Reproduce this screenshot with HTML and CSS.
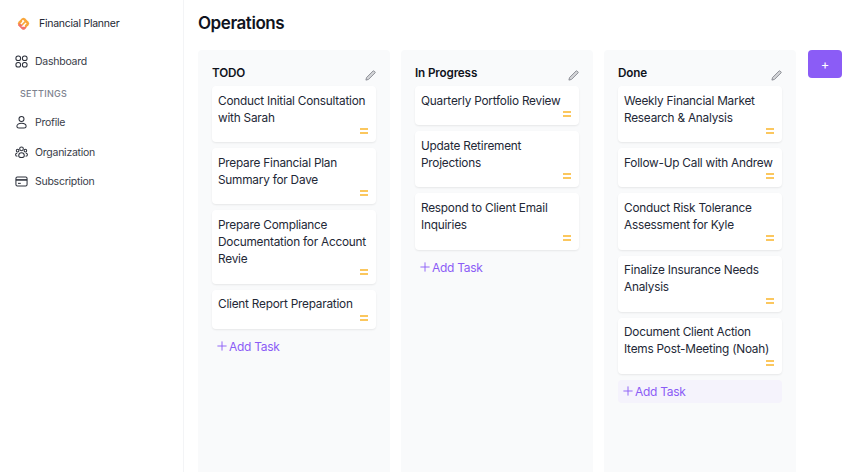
FILE: index.html
```html
<!DOCTYPE html>
<html lang="en">
<head>
<meta charset="utf-8">
<title>Operations</title>
<link rel="stylesheet" href="styles.css">
</head>
<body>
<div class="app">
  <aside class="sidebar">
    <div class="brand">
      <svg class="logo" width="15" height="15" viewBox="0 0 16 16"><rect x="3" y="3" width="10" height="10" rx="2.500" transform="rotate(45 8 8)" fill="#f9a63a"/><path d="M2.200 9.800L6.200 13.800a2.500 2.500 0 003.600 0l1.500-1.500-6.500-3.800-1.500-1z" fill="#f3736c"/><path d="M5.200 8.600L8.600 5.200M8.600 5.200H6.400M10.800 7.400L7.400 10.800H9.600" stroke="#fff" stroke-width="1.500" fill="none"/></svg>
      <span>Financial Planner</span>
    </div>
    <nav class="nav">
      <a class="nav-item">
        <svg class="nav-icon" viewBox="0 0 14 14"><rect x="1" y="1" width="5" height="5" rx="2.300"/><rect x="8" y="1" width="5" height="5" rx="2.300"/><rect x="1" y="8" width="5" height="5" rx="2.300"/><rect x="8" y="8" width="5" height="5" rx="2.300"/></svg>
        <span>Dashboard</span>
      </a>
      <div class="nav-heading">SETTINGS</div>
      <a class="nav-item">
        <svg class="nav-icon" viewBox="0 0 14 14"><circle cx="7" cy="3.300" r="2.700"/><path d="M7 7.700c-3 0-5 1.500-5 3.300 0 1.300 1 2 2.200 2h5.600c1.200 0 2.200-.7 2.200-2 0-1.800-2-3.300-5-3.300z"/></svg>
        <span>Profile</span>
      </a>
      <a class="nav-item">
        <svg class="nav-icon" viewBox="0 0 14 14"><circle cx="7" cy="3" r="2"/><circle cx="2.800" cy="5" r="1.400"/><circle cx="11.200" cy="5" r="1.400"/><path d="M4 10.500c0-2 1.200-3.200 3-3.200s3 1.200 3 3.200c0 1.300-1.300 2-3 2s-3-.7-3-2z"/><path d="M2.400 7.500C1.200 7.800.6 8.500.6 9.400c0 .9.800 1.500 2 1.600M11.600 7.500c1.200.3 1.800 1 1.800 1.900 0 .9-.8 1.500-2 1.600"/></svg>
        <span>Organization</span>
      </a>
      <a class="nav-item">
        <svg class="nav-icon" viewBox="0 0 14 14"><rect x="1" y="2.200" width="12" height="9.600" rx="1.500"/><path d="M1 5.300h12" stroke-width="1.700"/><path d="M3.200 9h3"/></svg>
        <span>Subscription</span>
      </a>
    </nav>
  </aside>
  <main class="main">
    <h1 class="title">Operations</h1>
    <div class="board">
      <section class="column">
        <header class="col-head"><h2>TODO</h2><svg class="edit" viewBox="0 0 12 12"><path d="M1 11l.7-2.800L8.800 1.100a.8.8 0 011.100 0l1 1a.8.8 0 010 1.100L3.800 10.300z"/></svg></header>
        <div class="cards">
          <article class="card"><p>Conduct Initial Consultation with Sarah</p><div class="card-foot"><span class="prio"></span></div></article>
          <article class="card"><p>Prepare Financial Plan Summary for Dave</p><div class="card-foot"><span class="prio"></span></div></article>
          <article class="card"><p>Prepare Compliance Documentation for Account Revie</p><div class="card-foot"><span class="prio"></span></div></article>
          <article class="card"><p>Client Report Preparation</p><div class="card-foot"><span class="prio"></span></div></article>
        </div>
        <a class="add"><svg viewBox="0 0 12 12"><path d="M6 .5v11M.5 6h11"/></svg>Add Task</a>
      </section>
      <section class="column">
        <header class="col-head"><h2>In Progress</h2><svg class="edit" viewBox="0 0 12 12"><path d="M1 11l.7-2.800L8.800 1.100a.8.8 0 011.100 0l1 1a.8.8 0 010 1.100L3.800 10.300z"/></svg></header>
        <div class="cards">
          <article class="card"><p>Quarterly Portfolio Review</p><div class="card-foot"><span class="prio"></span></div></article>
          <article class="card"><p>Update Retirement Projections</p><div class="card-foot"><span class="prio"></span></div></article>
          <article class="card"><p>Respond to Client Email Inquiries</p><div class="card-foot"><span class="prio"></span></div></article>
        </div>
        <a class="add"><svg viewBox="0 0 12 12"><path d="M6 .5v11M.5 6h11"/></svg>Add Task</a>
      </section>
      <section class="column">
        <header class="col-head"><h2>Done</h2><svg class="edit" viewBox="0 0 12 12"><path d="M1 11l.7-2.800L8.800 1.100a.8.8 0 011.100 0l1 1a.8.8 0 010 1.100L3.800 10.300z"/></svg></header>
        <div class="cards">
          <article class="card"><p>Weekly Financial Market Research &amp; Analysis</p><div class="card-foot"><span class="prio"></span></div></article>
          <article class="card"><p>Follow-Up Call with Andrew</p><div class="card-foot"><span class="prio"></span></div></article>
          <article class="card"><p>Conduct Risk Tolerance Assessment for Kyle</p><div class="card-foot"><span class="prio"></span></div></article>
          <article class="card"><p>Finalize Insurance Needs Analysis</p><div class="card-foot"><span class="prio"></span></div></article>
          <article class="card"><p>Document Client Action Items Post-Meeting (Noah)</p><div class="card-foot"><span class="prio"></span></div></article>
        </div>
        <a class="add add-hover"><svg viewBox="0 0 12 12"><path d="M6 .5v11M.5 6h11"/></svg>Add Task</a>
      </section>
      <button class="new-col" type="button">+</button>
    </div>
  </main>
</div>
</body>
</html>
```
FILE: styles.css
```css
* { box-sizing: border-box; }
html, body { height: 100%; }
body { margin: 0; font-family: Inter, "Liberation Sans", sans-serif; color: #1f2430; background: #fff; overflow: hidden; }
.app { display: flex; height: 472px; }
.sidebar { width: 184px; flex: none; border-right: 1px solid #f3f4f6; padding: 15px 14px 0 15px; }
.brand { display: flex; align-items: center; gap: 8px; height: 17px; padding-left: 1px; font-size: 10.500px; letter-spacing: -.25px; color: #232733; }
.logo { flex: none; }
.nav { margin-top: 15px; display: flex; flex-direction: column; }
.nav-item { display: flex; align-items: center; gap: 7px; height: 29.700px; font-size: 10.500px; letter-spacing: -.25px; color: #383c48; }
.nav-icon { width: 13px; height: 13px; flex: none; fill: none; stroke: #2c303b; stroke-width: 1.100; }
.nav-heading { font-size: 9px; font-weight: 500; color: #7d828e; letter-spacing: .3px; margin: 10px 0 7px 5px; height: 14px; line-height: 14px; }
.main { flex: 1; padding: 12px 0 0 14px; min-width: 0; }
.title { margin: 0 0 15px; font-size: 17px; letter-spacing: -.45px; font-weight: 600; line-height: 23px; color: #0f1320; }
.board { display: flex; gap: 11px; align-items: flex-start; }
.column { width: 192px; height: 430px; flex: none; background: #f9fafb; border-radius: 4px; padding: 14px 14px 0; }
.col-head { display: flex; justify-content: space-between; align-items: flex-end; height: 22px; }
.col-head h2 { margin: 0 0 4px; font-size: 11.700px; letter-spacing: -.15px; font-weight: 600; line-height: 18px; color: #10131c; }
.edit { width: 11px; height: 11px; fill: #d4d5d8; stroke: #85888f; stroke-width: 1; margin-bottom: 5px; }
.cards { display: flex; flex-direction: column; gap: 6px; }
.card { background: #fff; border-radius: 4px; padding: 6.600px 6px 0; box-shadow: 0 1px 2px rgba(0,0,0,.08); }
.card p { margin: 0; font-size: 11.800px; letter-spacing: -.22px; line-height: 17px; color: #232836; }
.card-foot { display: flex; justify-content: flex-end; height: 15.600px; padding: 1.400px 2px 0 0; }
.prio { width: 8px; height: 6px; background: linear-gradient(#fbc75e 0 2px, transparent 2px 4px, #fbc75e 4px 6px); }
.add { display: flex; align-items: center; gap: 2px; height: 23px; margin-top: 6px; padding-left: 5px; font-size: 12px; letter-spacing: -.3px; color: #8b5cf6; border-radius: 4px; }
.add svg { width: 10px; height: 10px; fill: none; stroke: #8b5cf6; stroke-width: 1.100; }
.add-hover { background: #f5f3fc; }
.new-col { width: 34px; height: 28px; flex: none; margin-left: 1px; border: 0; border-radius: 4px; background: #8b5cf6; color: #fff; font: 400 13px Inter, sans-serif; padding: 0; }
```
